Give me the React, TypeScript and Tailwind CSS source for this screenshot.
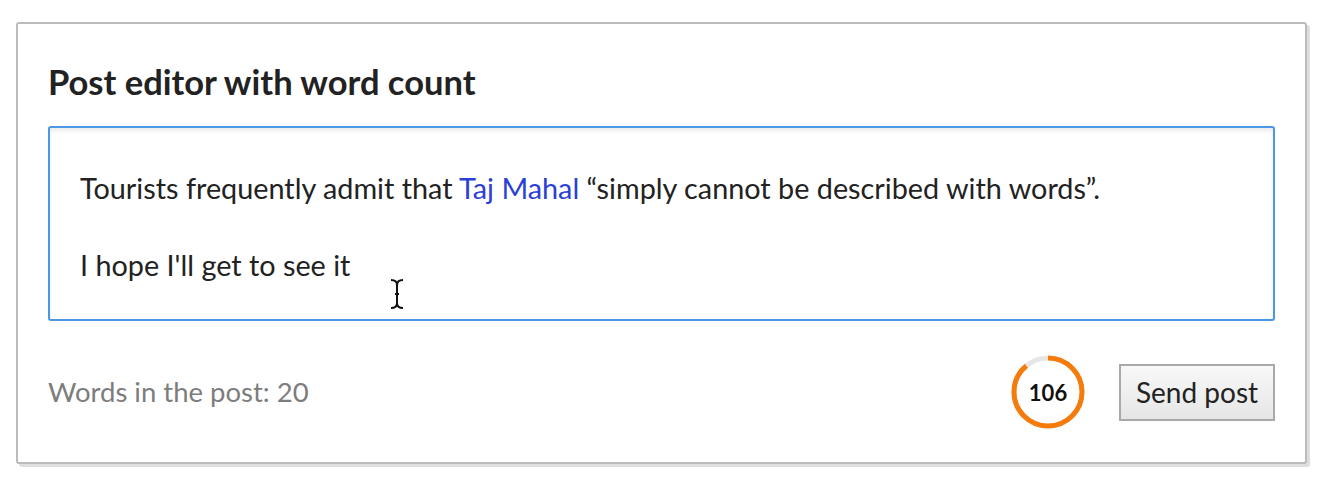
import React from "react";

const font = { fontFamily: "Lato, 'Open Sans', sans-serif" };

function Ring() {
  const r = 34;
  const c = 2 * Math.PI * r;
  const frac = 320 / 360;
  return (
    <div className="relative w-[74px] h-[74px]">
      <svg width="74" height="74" viewBox="0 0 74 74" className="absolute inset-0">
        <circle cx="37" cy="37" r={r} fill="none" stroke="#e6e6e6" strokeWidth="5" />
        <circle
          cx="37"
          cy="37"
          r={r}
          fill="none"
          stroke="#f57c0a"
          strokeWidth="5"
          strokeDasharray={`${c * frac} ${c}`}
          transform="rotate(-90 37 37)"
        />
      </svg>
      <div className="absolute inset-0 flex items-center justify-center text-[22px] font-bold text-[#111]">
        106
      </div>
    </div>
  );
}

export default function App() {
  return (
    <div className="w-[1328px] h-[492px] bg-white" style={font}>
      <div className="pt-[22px] pl-[16px]">
        <div className="w-[1291px] h-[442px] border-2 border-[#bcbcbc] rounded-[3px] shadow-[3px_3px_0_#dedede] bg-white px-[30px] pt-[38px]">
          <h1 className="text-[34.5px] leading-[40px] font-bold text-[#222]">Post editor with word count</h1>
          <div className="relative mt-[24px] h-[195px] border-2 border-[#4b96e6] rounded-[3px] shadow-[inset_0_3px_4px_rgba(0,0,0,0.08)] px-[30px] pt-[42px] text-[28.8px] leading-[36px] text-[#222]">
            <p>
              Tourists frequently admit that <span className="text-[#2b3fd6]">Taj Mahal</span> “simply cannot be described with words”.
            </p>
            <p className="mt-[41px]">I hope I'll get to see it</p>
            <svg className="absolute left-[340px] top-[150px]" width="14" height="32" viewBox="0 0 14 32">
              <path d="M1 2 Q7 2 7 7 L7 25 Q7 30 1 30 M13 2 Q7 2 7 7 M7 25 Q7 30 13 30 M5 16 L9 16" fill="none" stroke="#111" strokeWidth="2" />
            </svg>
          </div>
          <div className="mt-[34px] flex items-center justify-between">
            <div className="text-[27.5px] text-[#7d7d7d]">Words in the post: 20</div>
            <div className="flex items-center gap-[34px]">
              <Ring />
              <button className="w-[156px] h-[57px] border-2 border-[#a9a9a9] bg-gradient-to-b from-[#f8f8f8] to-[#e6e6e6] text-[28px] text-[#222]">
                Send post
              </button>
            </div>
          </div>
        </div>
      </div>
    </div>
  );
}
